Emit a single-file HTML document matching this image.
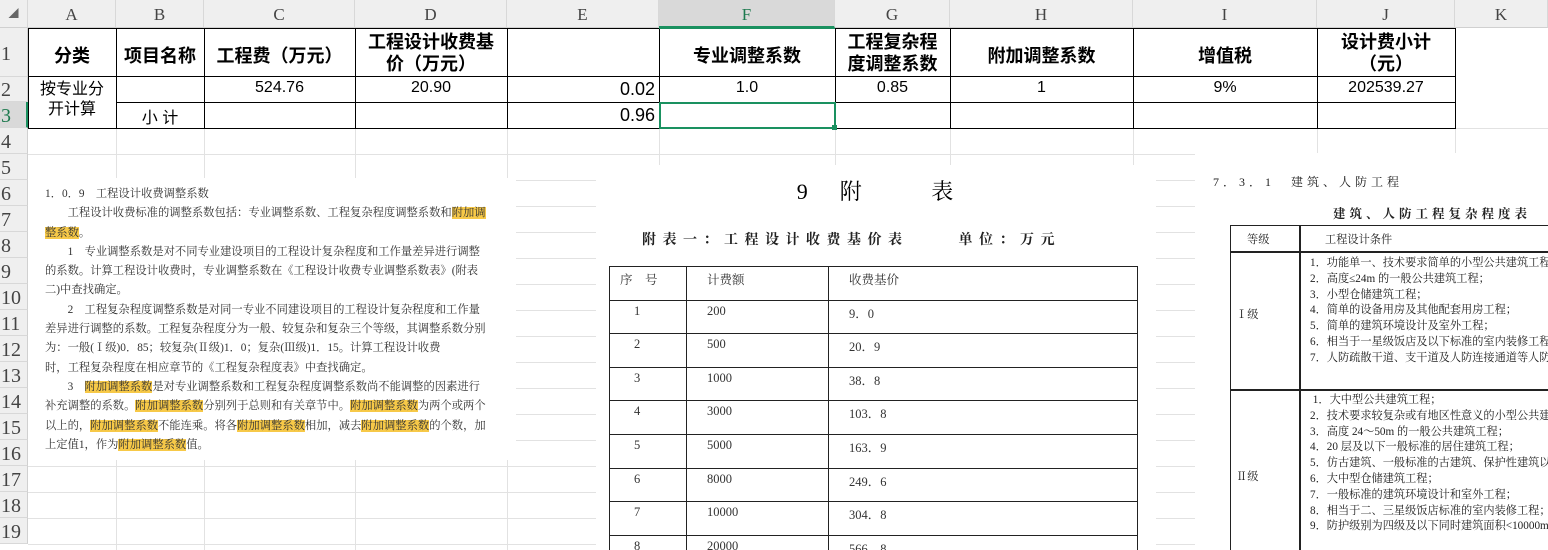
<!DOCTYPE html>
<html><head><meta charset="utf-8"><style>
*{margin:0;padding:0;box-sizing:border-box}
body{width:1548px;height:550px;overflow:hidden;background:#fff;position:relative;font-family:"Liberation Serif","Noto Serif CJK SC",serif;color:#000}
.a{position:absolute}
.ch{position:absolute;top:0;height:28px;background:#efefef;border-right:1px solid #d8d8d8;border-bottom:1px solid #d0d0d0;text-align:center;line-height:30px;font-size:17px;color:#444}
.rh{position:absolute;left:0;width:28px;background:#efefef;border-bottom:1px solid #d8d8d8;border-right:1px solid #d0d0d0;font-size:20px;color:#444;padding-left:1px}
.vl{position:absolute;top:28px;width:1px;background:#e2e2e2;height:522px}
.hl{position:absolute;left:28px;height:1px;background:#e2e2e2;width:1520px}
.t{position:absolute;font-family:"Liberation Sans","Noto Sans CJK SC",sans-serif;font-size:18px;text-align:center}
.b{font-weight:bold}
.lt{position:absolute;left:28px;top:178px;width:488px;height:282px;background:#fff;font-size:11.3px;color:#333;line-height:19.3px;padding:7px 0 0 17px;letter-spacing:0;white-space:nowrap;overflow:hidden;font-family:"Liberation Serif","Noto Serif CJK SC",serif}
.hi{background:#f7c948}
.mt td{border:1.5px solid #222;height:33.6px;vertical-align:top;padding:3px 0 0 0;font-size:12.5px;color:#333}
.rt{font-size:11.2px;color:#222;line-height:15.8px}
</style></head><body>
<div class="vl" style="left:116px"></div><div class="vl" style="left:204px"></div><div class="vl" style="left:355px"></div><div class="vl" style="left:507px"></div><div class="vl" style="left:659px"></div><div class="vl" style="left:835px"></div><div class="vl" style="left:950px"></div><div class="vl" style="left:1133px"></div><div class="vl" style="left:1317px"></div><div class="vl" style="left:1455px"></div>
<div class="hl" style="top:128px"></div><div class="hl" style="top:154px"></div><div class="hl" style="top:180px"></div><div class="hl" style="top:206px"></div><div class="hl" style="top:232px"></div><div class="hl" style="top:258px"></div><div class="hl" style="top:284px"></div><div class="hl" style="top:310px"></div><div class="hl" style="top:336px"></div><div class="hl" style="top:362px"></div><div class="hl" style="top:388px"></div><div class="hl" style="top:414px"></div><div class="hl" style="top:440px"></div><div class="hl" style="top:466px"></div><div class="hl" style="top:492px"></div><div class="hl" style="top:518px"></div><div class="hl" style="top:544px"></div>
<div class="ch" style="left:0;width:28px;font-size:10px;color:#666">◢</div>
<div class="ch" style="left:28px;width:88px">A</div><div class="ch" style="left:116px;width:88px">B</div><div class="ch" style="left:204px;width:151px">C</div><div class="ch" style="left:355px;width:152px">D</div><div class="ch" style="left:507px;width:152px">E</div>
<div class="ch" style="left:659px;width:176px;background:#d9d9d9;color:#1e7a4f;border-bottom:2px solid #1a9160">F</div>
<div class="ch" style="left:835px;width:115px">G</div><div class="ch" style="left:950px;width:183px">H</div><div class="ch" style="left:1133px;width:184px">I</div><div class="ch" style="left:1317px;width:138px">J</div><div class="ch" style="left:1455px;width:93px">K</div>
<div class="rh" style="top:28px;height:49px;line-height:52px">1</div>
<div class="rh" style="top:77px;height:25px;line-height:27px">2</div>
<div class="rh" style="top:102px;height:26px;line-height:28px;background:#d9d9d9;color:#1e7a4f;border-right:2px solid #1a9160">3</div>
<div class="rh" style="top:128px;height:26px;line-height:28px">4</div><div class="rh" style="top:154px;height:26px;line-height:28px">5</div><div class="rh" style="top:180px;height:26px;line-height:28px">6</div><div class="rh" style="top:206px;height:26px;line-height:28px">7</div><div class="rh" style="top:232px;height:26px;line-height:28px">8</div><div class="rh" style="top:258px;height:26px;line-height:28px">9</div><div class="rh" style="top:284px;height:26px;line-height:28px">10</div><div class="rh" style="top:310px;height:26px;line-height:28px">11</div><div class="rh" style="top:336px;height:26px;line-height:28px">12</div><div class="rh" style="top:362px;height:26px;line-height:28px">13</div><div class="rh" style="top:388px;height:26px;line-height:28px">14</div><div class="rh" style="top:414px;height:26px;line-height:28px">15</div><div class="rh" style="top:440px;height:26px;line-height:28px">16</div><div class="rh" style="top:466px;height:26px;line-height:28px">17</div><div class="rh" style="top:492px;height:26px;line-height:28px">18</div><div class="rh" style="top:518px;height:26px;line-height:28px">19</div>
<div class="a" style="left:28px;top:28px;width:1428px;height:101px;border:1px solid #000;background:#fff"></div>
<div class="a" style="left:28px;top:76px;width:1428px;height:1px;background:#000"></div>
<div class="a" style="left:116px;top:102px;width:1340px;height:1px;background:#000"></div>
<div class="a" style="left:116px;top:28px;width:1px;height:101px;background:#000"></div>
<div class="a" style="left:204px;top:28px;width:1px;height:101px;background:#000"></div>
<div class="a" style="left:355px;top:28px;width:1px;height:101px;background:#000"></div>
<div class="a" style="left:507px;top:28px;width:1px;height:101px;background:#000"></div>
<div class="a" style="left:659px;top:28px;width:1px;height:101px;background:#000"></div>
<div class="a" style="left:835px;top:28px;width:1px;height:101px;background:#000"></div>
<div class="a" style="left:950px;top:28px;width:1px;height:101px;background:#000"></div>
<div class="a" style="left:1133px;top:28px;width:1px;height:101px;background:#000"></div>
<div class="a" style="left:1317px;top:28px;width:1px;height:101px;background:#000"></div>
<div class="a" style="left:659px;top:28px;width:176px;height:1px;background:#1a9160"></div>
<div class="a" style="left:659px;top:102px;width:177px;height:27px;border:2px solid #1a9160"></div>
<div class="a" style="left:832px;top:125px;width:5px;height:5px;background:#1a9160"></div>
<div class="t b" style="left:28px;top:42px;width:88px">分类</div>
<div class="t b" style="left:116px;top:42px;width:88px">项目名称</div>
<div class="t b" style="left:204px;top:42px;width:151px">工程费（万元）</div>
<div class="t b" style="left:355px;top:31px;width:152px;line-height:22px">工程设计收费基<br>价（万元）</div>
<div class="t b" style="left:659px;top:42px;width:176px">专业调整系数</div>
<div class="t b" style="left:835px;top:31px;width:115px;line-height:22px">工程复杂程<br>度调整系数</div>
<div class="t b" style="left:950px;top:42px;width:183px">附加调整系数</div>
<div class="t b" style="left:1133px;top:42px;width:184px">增值税</div>
<div class="t b" style="left:1317px;top:31px;width:138px;line-height:22px">设计费小计<br>（元）</div>
<div class="t" style="left:28px;top:80px;width:88px;font-size:16px;line-height:20px">按专业分<br>开计算</div>
<div class="t" style="left:116px;top:104px;width:88px;font-size:16px">小 计</div>
<div class="t" style="left:204px;top:79px;width:151px;font-size:16px">524.76</div>
<div class="t" style="left:355px;top:79px;width:152px;font-size:16px">20.90</div>
<div class="t" style="left:507px;top:79px;width:148px;text-align:right">0.02</div>
<div class="t" style="left:507px;top:105px;width:148px;text-align:right">0.96</div>
<div class="t" style="left:659px;top:79px;width:176px;font-size:16px">1.0</div>
<div class="t" style="left:835px;top:79px;width:115px;font-size:16px">0.85</div>
<div class="t" style="left:950px;top:79px;width:183px;font-size:16px">1</div>
<div class="t" style="left:1133px;top:79px;width:184px;font-size:16px">9%</div>
<div class="t" style="left:1317px;top:79px;width:138px;font-size:16px">202539.27</div>
<div class="lt">
<div>1．0．9　工程设计收费调整系数</div>
<div>　　工程设计收费标准的调整系数包括：专业调整系数、工程复杂程度调整系数和<span class="hi">附加调</span></div>
<div><span class="hi">整系数</span>。</div>
<div>　　1　专业调整系数是对不同专业建设项目的工程设计复杂程度和工作量差异进行调整</div>
<div>的系数。计算工程设计收费时，专业调整系数在《工程设计收费专业调整系数表》(附表</div>
<div>二)中查找确定。</div>
<div>　　2　工程复杂程度调整系数是对同一专业不同建设项目的工程设计复杂程度和工作量</div>
<div>差异进行调整的系数。工程复杂程度分为一般、较复杂和复杂三个等级，其调整系数分别</div>
<div>为：一般(Ⅰ级)0．85；较复杂(Ⅱ级)1．0；复杂(Ⅲ级)1．15。计算工程设计收费</div>
<div>时，工程复杂程度在相应章节的《工程复杂程度表》中查找确定。</div>
<div>　　3　<span class="hi">附加调整系数</span>是对专业调整系数和工程复杂程度调整系数尚不能调整的因素进行</div>
<div>补充调整的系数。<span class="hi">附加调整系数</span>分别列于总则和有关章节中。<span class="hi">附加调整系数</span>为两个或两个</div>
<div>以上的，<span class="hi">附加调整系数</span>不能连乘。将各<span class="hi">附加调整系数</span>相加，减去<span class="hi">附加调整系数</span>的个数，加</div>
<div>上定值1，作为<span class="hi">附加调整系数</span>值。</div>
</div>
<div class="a" style="left:596px;top:165px;width:560px;height:385px;background:#fff;overflow:hidden">
<div class="a" style="left:0;top:10px;width:560px;text-align:center;font-size:22px;letter-spacing:2px">9&nbsp;&nbsp;&nbsp;&nbsp;附&nbsp;&nbsp;&nbsp;&nbsp;&nbsp;&nbsp;&nbsp;&nbsp;&nbsp;表</div>
<div class="a" style="left:46px;top:64px;font-size:14px;font-weight:bold;letter-spacing:6.5px;white-space:nowrap;color:#222">附表一：工程设计收费基价表&nbsp;&nbsp;&nbsp;&nbsp;&nbsp;单位：万元</div>
<table class="mt a" style="left:13px;top:101px;width:529px;border-collapse:collapse">
<tr><td style="width:77px;padding-left:10px">序　号</td><td style="width:142px;padding-left:20px">计费额</td><td style="padding-left:20px">收费基价</td></tr>
<tr><td style="padding-left:24px">1</td><td style="padding-left:20px">200</td><td style="padding-left:20px">9．0</td></tr>
<tr><td style="padding-left:24px">2</td><td style="padding-left:20px">500</td><td style="padding-left:20px">20．9</td></tr>
<tr><td style="padding-left:24px">3</td><td style="padding-left:20px">1000</td><td style="padding-left:20px">38．8</td></tr>
<tr><td style="padding-left:24px">4</td><td style="padding-left:20px">3000</td><td style="padding-left:20px">103．8</td></tr>
<tr><td style="padding-left:24px">5</td><td style="padding-left:20px">5000</td><td style="padding-left:20px">163．9</td></tr>
<tr><td style="padding-left:24px">6</td><td style="padding-left:20px">8000</td><td style="padding-left:20px">249．6</td></tr>
<tr><td style="padding-left:24px">7</td><td style="padding-left:20px">10000</td><td style="padding-left:20px">304．8</td></tr>
<tr><td style="padding-left:24px">8</td><td style="padding-left:20px">20000</td><td style="padding-left:20px">566．8</td></tr>
</table>
</div>
<div class="a" style="left:1195px;top:153px;width:353px;height:397px;background:#fff;overflow:hidden">
<div class="a" style="left:18px;top:20px;font-size:12px;letter-spacing:4px;white-space:nowrap;color:#222">7．3．1　建筑、人防工程</div>
<div class="a" style="left:138px;top:51px;font-size:12.5px;font-weight:bold;letter-spacing:4px;white-space:nowrap;color:#222">建筑、人防工程复杂程度表</div>
<div class="a" style="left:35px;top:72px;width:330px;height:330px;border-left:1.5px solid #222;border-top:1.5px solid #222"></div>
<div class="a" style="left:104px;top:72px;width:1.5px;height:330px;background:#222"></div>
<div class="a" style="left:35px;top:98px;width:320px;height:1.5px;background:#222"></div>
<div class="a" style="left:35px;top:236px;width:320px;height:1.5px;background:#222"></div>
<div class="a rt" style="left:52px;top:80px">等级</div>
<div class="a rt" style="left:130px;top:80px">工程设计条件</div>
<div class="a rt" style="left:41px;top:155px">Ⅰ级</div>
<div class="a rt" style="left:41px;top:317px">Ⅱ级</div>
<div class="a rt" style="left:115px;top:103px;white-space:nowrap">1．功能单一、技术要求简单的小型公共建筑工程；<br>2．高度≤24m 的一般公共建筑工程；<br>3．小型仓储建筑工程；<br>4．简单的设备用房及其他配套用房工程；<br>5．简单的建筑环境设计及室外工程；<br>6．相当于一星级饭店及以下标准的室内装修工程；<br>7．人防疏散干道、支干道及人防连接通道等人防配套工程</div>
<div class="a rt" style="left:115px;top:240px;white-space:nowrap">&nbsp;1．大中型公共建筑工程；<br>2．技术要求较复杂或有地区性意义的小型公共建筑工程；<br>3．高度 24～50m 的一般公共建筑工程；<br>4．20 层及以下一般标准的居住建筑工程；<br>5．仿古建筑、一般标准的古建筑、保护性建筑以及地下建筑；<br>6．大中型仓储建筑工程；<br>7．一般标准的建筑环境设计和室外工程；<br>8．相当于二、三星级饭店标准的室内装修工程；<br>9．防护级别为四级及以下同时建筑面积&lt;10000m²的人防工程</div>
</div>
</body></html>
